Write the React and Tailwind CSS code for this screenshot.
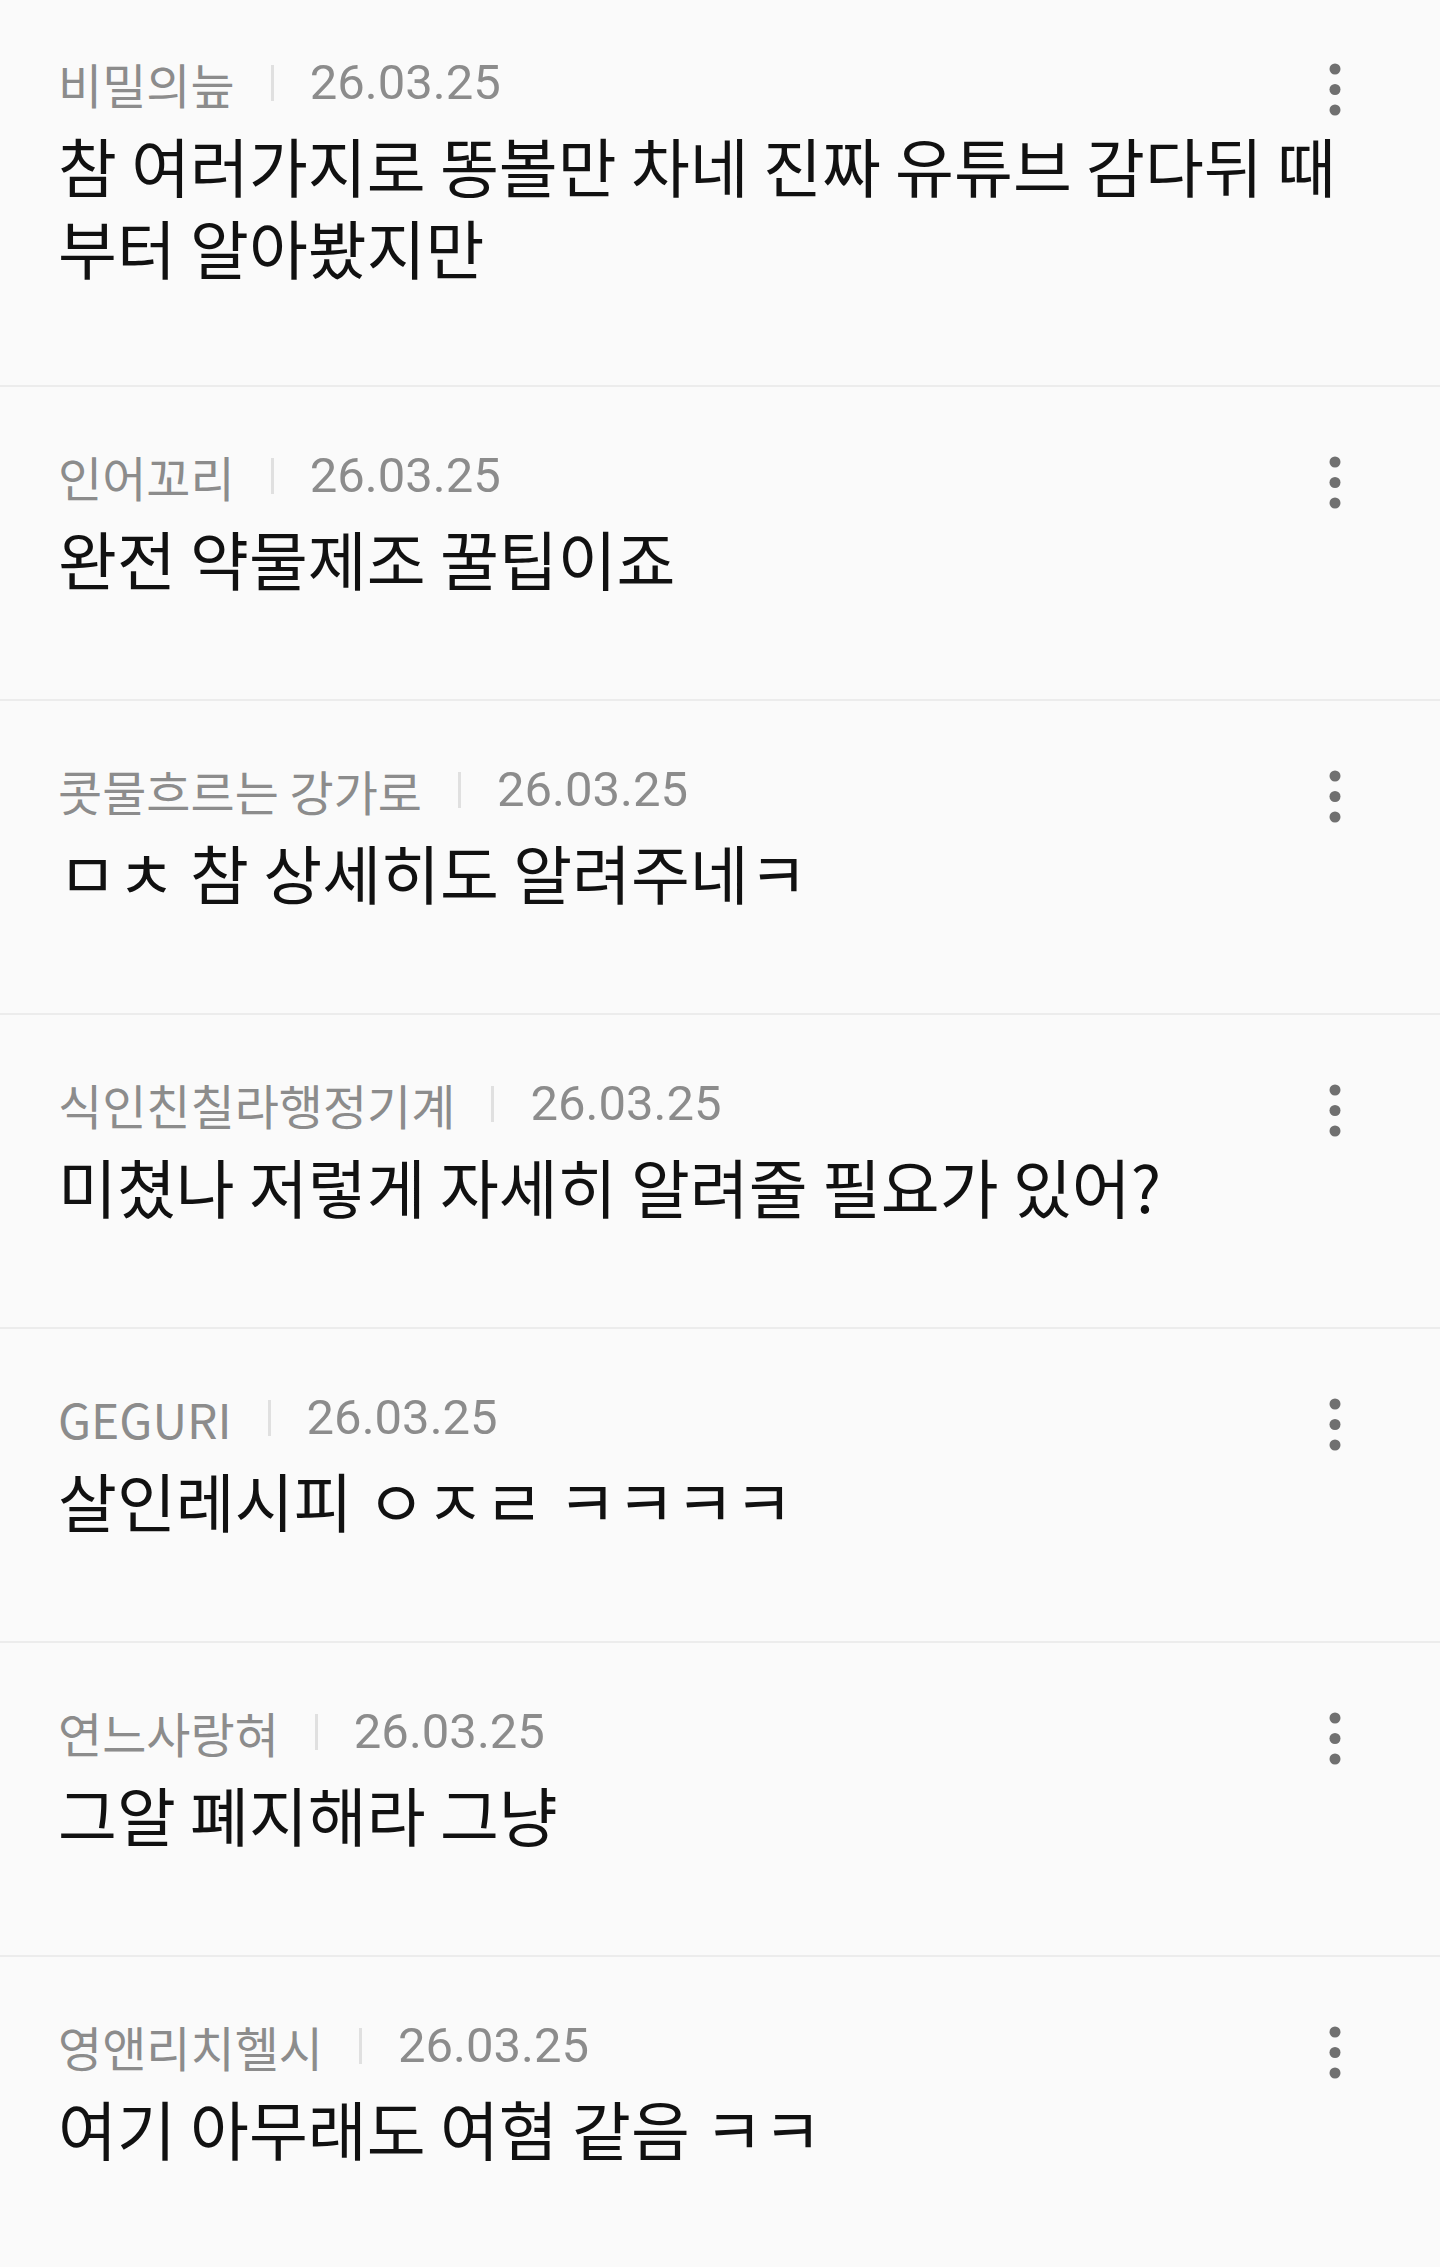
const comments = [
  { name: '비밀의늪', date: '26.03.25', text: '참 여러가지로 똥볼만 차네 진짜 유튜브 감다뒤 때부터 알아봤지만' },
  { name: '인어꼬리', date: '26.03.25', text: '완전 약물제조 꿀팁이죠' },
  { name: '콧물흐르는 강가로', date: '26.03.25', text: 'ㅁㅊ 참 상세히도 알려주네ㅋ' },
  { name: '식인친칠라행정기계', date: '26.03.25', text: '미쳤나 저렇게 자세히 알려줄 필요가 있어?' },
  { name: 'GEGURI', date: '26.03.25', text: '살인레시피 ㅇㅈㄹ ㅋㅋㅋㅋ' },
  { name: '연느사랑혀', date: '26.03.25', text: '그알 폐지해라 그냥' },
  { name: '영앤리치헬시', date: '26.03.25', text: '여기 아무래도 여혐 같음 ㅋㅋ' },
];

function MoreIcon() {
  return (
    <svg width="12" height="54" viewBox="0 0 12 54" className="block">
      <circle cx="6" cy="6" r="5.5" fill="#707070" />
      <circle cx="6" cy="26.5" r="5.5" fill="#707070" />
      <circle cx="6" cy="47" r="5.5" fill="#707070" />
    </svg>
  );
}

function CommentRow({ comment, first }) {
  return (
    <div
      className={`border-b-2 border-[#ececec] px-[58px] ${
        first ? 'pt-[55px] pb-[98px]' : 'pt-[61px] pb-[101px]'
      }`}
    >
      <div className="flex h-[56px] items-start justify-between">
        <div className="flex h-[56px] items-center text-[#8c8c8c]">
          <span className="text-[48px] leading-[56px] font-['Noto_Sans_CJK_KR',sans-serif]">
            {comment.name}
          </span>
          <span className="mx-[36px] h-[36px] w-[3px] bg-[#e0e0e0]" />
          <span className="text-[49px] leading-[56px] font-['Roboto','Noto_Sans_CJK_KR',sans-serif]">
            {comment.date}
          </span>
        </div>
        <button className="mt-[8px] mr-[41px] shrink-0">
          <MoreIcon />
        </button>
      </div>
      <p className="mt-[12px] text-[64px] leading-[82px] text-[#111111] font-['Noto_Sans_CJK_KR',sans-serif]">
        {comment.text}
      </p>
    </div>
  );
}

export default function App() {
  return (
    <div className="min-h-screen overflow-hidden bg-[#fafafa]">
      {comments.map((c, i) => (
        <CommentRow key={i} comment={c} first={i === 0} />
      ))}
    </div>
  );
}
